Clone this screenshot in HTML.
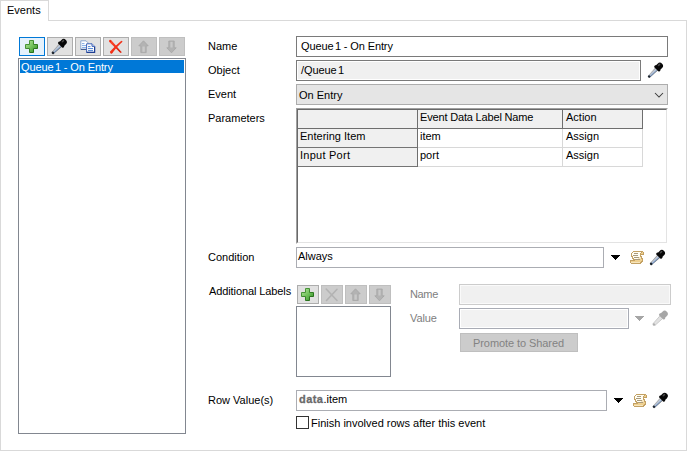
<!DOCTYPE html>
<html><head><meta charset="utf-8">
<style>
*{box-sizing:border-box;margin:0;padding:0}
html,body{width:687px;height:451px;overflow:hidden;background:#fff}
body{position:relative;font-family:"Liberation Sans",sans-serif;font-size:11px;color:#000}
.a{position:absolute}
.t{position:absolute;white-space:nowrap;line-height:13px;height:13px}
.btn{position:absolute;background:#e1e1e1;border:1px solid #adadad}
.dis{position:absolute;background:#cccccc;border:1px solid #bfbfbf}
svg{position:absolute;overflow:visible}
</style></head><body>
<!-- tab + panel -->
<div class="a" style="left:0;top:0;width:49px;height:21px;border:1px solid #d9d9d9;border-bottom:none;background:#fff"></div>
<div class="a" style="left:48px;top:20px;width:639px;height:1px;background:#d9d9d9"></div>
<div class="a" style="left:0;top:20px;width:1px;height:431px;background:#d9d9d9"></div>
<div class="a" style="left:686px;top:20px;width:1px;height:431px;background:#d9d9d9"></div>
<div class="a" style="left:0;top:450px;width:687px;height:1px;background:#d9d9d9"></div>
<div class="t" style="left:7px;top:4px">Events</div>

<!-- left toolbar -->
<div class="a" style="left:19px;top:37px;width:26px;height:19px;background:#e5f1fb;border:1px solid #0078d7"></div>
<div class="btn" style="left:47px;top:37px;width:26px;height:19px"></div>
<div class="btn" style="left:75px;top:37px;width:26px;height:19px"></div>
<div class="btn" style="left:103px;top:37px;width:26px;height:19px"></div>
<div class="dis" style="left:131px;top:37px;width:26px;height:19px"></div>
<div class="dis" style="left:159px;top:37px;width:26px;height:19px"></div>

<!-- list -->
<div class="a" style="left:18px;top:58px;width:168px;height:376px;border:1px solid #828790;background:#fff"></div>
<div class="a" style="left:20px;top:60px;width:164px;height:13px;background:#0078d7"></div>
<div class="t" style="left:21px;top:61px;color:#fff;letter-spacing:-0.12px">Queue<span style="margin-left:1.5px">1</span> - On Entry</div>

<!-- labels -->
<div class="t" style="left:208px;top:40px">Name</div>
<div class="t" style="left:208px;top:64px">Object</div>
<div class="t" style="left:208px;top:88px">Event</div>
<div class="t" style="left:208px;top:112px">Parameters</div>
<div class="t" style="left:208px;top:251px">Condition</div>
<div class="t" style="left:209px;top:285px;letter-spacing:-0.1px">Additional Labels</div>
<div class="t" style="left:208px;top:394px">Row Value(s)</div>

<!-- Name -->
<div class="a" style="left:296px;top:36px;width:372px;height:21px;border:1px solid #7a7a7a;background:#fff"></div>
<div class="t" style="left:301px;top:40px;letter-spacing:-0.12px">Queue<span style="margin-left:1.5px">1</span> - On Entry</div>
<!-- Object -->
<div class="a" style="left:296px;top:60px;width:345px;height:21px;border:1px solid #7a7a7a;background:#f0f0f0;box-shadow:inset 0 0 0 1px #fff"></div>
<div class="t" style="left:301px;top:64px;letter-spacing:-0.1px">/Queue<span style="margin-left:1.5px">1</span></div>
<!-- Event -->
<div class="a" style="left:296px;top:84px;width:372px;height:21px;border:1px solid #adadad;background:#e5e5e5"></div>
<div class="t" style="left:299px;top:89px">On Entry</div>

<!-- table -->
<div class="a" style="left:296px;top:108px;width:372px;height:136px;border-top:1px solid #a0a0a0;border-left:1px solid #a0a0a0;border-right:1px solid #fff;border-bottom:1px solid #fff"></div>
<div class="a" style="left:297px;top:109px;width:370px;height:134px;border-top:1px solid #696969;border-left:1px solid #696969;border-right:1px solid #e3e3e3;border-bottom:1px solid #e3e3e3;background:#fff"></div>
<!-- header row -->
<div class="a" style="left:298px;top:110px;width:345px;height:18px;background:#f0f0f0"></div>
<!-- row header col -->
<div class="a" style="left:298px;top:128px;width:119px;height:38px;background:#f0f0f0"></div>
<!-- light gridlines -->
<div class="a" style="left:418px;top:147px;width:225px;height:1px;background:#d8d8d8"></div>
<div class="a" style="left:418px;top:166px;width:225px;height:1px;background:#d8d8d8"></div>
<div class="a" style="left:562px;top:129px;width:1px;height:38px;background:#d8d8d8"></div>
<div class="a" style="left:642px;top:129px;width:1px;height:38px;background:#d8d8d8"></div>
<!-- dark gridlines -->
<div class="a" style="left:298px;top:128px;width:345px;height:1px;background:#6e6e6e"></div>
<div class="a" style="left:298px;top:147px;width:120px;height:1px;background:#747474"></div>
<div class="a" style="left:298px;top:166px;width:120px;height:1px;background:#747474"></div>
<div class="a" style="left:417px;top:110px;width:1px;height:57px;background:#6e6e6e"></div>
<div class="a" style="left:562px;top:110px;width:1px;height:19px;background:#6e6e6e"></div>
<div class="a" style="left:642px;top:110px;width:1px;height:19px;background:#6e6e6e"></div>
<div class="t" style="left:420px;top:111px;letter-spacing:-0.17px">Event Data Label Name</div>
<div class="t" style="left:566px;top:111px">Action</div>
<div class="t" style="left:300px;top:130px">Entering Item</div>
<div class="t" style="left:420px;top:130px">item</div>
<div class="t" style="left:566px;top:130px">Assign</div>
<div class="t" style="left:300px;top:149px;letter-spacing:0.25px">Input Port</div>
<div class="t" style="left:420px;top:149px">port</div>
<div class="t" style="left:566px;top:149px">Assign</div>

<!-- condition -->
<div class="a" style="left:296px;top:247px;width:308px;height:21px;border:1px solid #abadb3;background:#fff"></div>
<div class="t" style="left:298px;top:250px">Always</div>

<!-- additional labels -->
<div class="btn" style="left:297px;top:285px;width:22px;height:19px"></div>
<div class="dis" style="left:321px;top:285px;width:22px;height:19px"></div>
<div class="dis" style="left:345px;top:285px;width:22px;height:19px"></div>
<div class="dis" style="left:369px;top:285px;width:22px;height:19px"></div>
<div class="a" style="left:296px;top:306px;width:95px;height:71px;border:1px solid #828790;background:#fff"></div>

<div class="t" style="left:410px;top:288px;color:#7e7e7e;letter-spacing:-0.35px">Name</div>
<div class="t" style="left:410px;top:312px;color:#7e7e7e;letter-spacing:-0.1px">Value</div>
<div class="a" style="left:459px;top:284px;width:212px;height:21px;border:1px solid #cccccc;background:#f0f0f0;box-shadow:inset 0 0 0 1px #fafafa"></div>
<div class="a" style="left:459px;top:308px;width:170px;height:21px;border:1px solid #a9acb5;background:#f2f2f2;box-shadow:inset 0 0 0 1px #fff"></div>
<div class="a" style="left:460px;top:333px;width:118px;height:19px;background:#cccccc;border:1px solid #bfbfbf"></div>
<div class="t" style="left:473px;top:337px;color:#838383;letter-spacing:-0.08px">Promote to Shared</div>

<!-- row values -->
<div class="a" style="left:296px;top:390px;width:311px;height:21px;border:1px solid #abadb3;background:#fff"></div>
<div class="t" style="left:299px;top:393px"><b style="color:#6a6a6a;letter-spacing:0.45px;-webkit-text-stroke:0.3px #6a6a6a">data</b>.item</div>
<div class="a" style="left:296px;top:416px;width:13px;height:13px;border:1px solid #333;background:#fff"></div>
<div class="t" style="left:311px;top:417px">Finish involved rows after this event</div>

<svg width="687" height="451" viewBox="0 0 687 451" style="left:0;top:0">
<defs>
<linearGradient id="gs" x1="0" y1="0" x2="1" y2="1"><stop offset="0" stop-color="#56a444"/><stop offset="1" stop-color="#1b6410"/></linearGradient>
<linearGradient id="gp" x1="0" y1="0" x2="1" y2="1">
<stop offset="0" stop-color="#b9e6a4"/><stop offset="0.5" stop-color="#72c25c"/><stop offset="1" stop-color="#2f8a25"/>
</linearGradient>
<linearGradient id="tube" gradientUnits="userSpaceOnUse" x1="-1.9" y1="0" x2="1.9" y2="0">
<stop offset="0" stop-color="#4a4a4a"/><stop offset="0.22" stop-color="#a4aab2"/><stop offset="0.45" stop-color="#b4c2d6"/><stop offset="0.68" stop-color="#6a8cbc"/><stop offset="0.85" stop-color="#4a5a70"/><stop offset="1" stop-color="#2e2e2e"/>
</linearGradient>
<linearGradient id="tubeL" gradientUnits="userSpaceOnUse" x1="0" y1="8" x2="0" y2="18">
<stop offset="0" stop-color="#fff" stop-opacity="0.3"/><stop offset="1" stop-color="#fff" stop-opacity="0"/>
</linearGradient>
<g id="drop">
<path d="M-1.9,7.6 L1.9,7.6 L1.3,18 L-1.3,18 Z" fill="url(#tube)"/>
<path d="M-1.9,7.6 L1.9,7.6 L1.3,18 L-1.3,18 Z" fill="url(#tubeL)"/>
<rect x="-1.3" y="17.1" width="2.6" height="2.3" rx="1" fill="#1e2630"/>
<path d="M-3.1,6.2 V3.1 A3.1,3.1 0 0 1 3.1,3.1 V6.2 Z" fill="#070707"/>
<rect x="-3.7" y="5.4" width="7.4" height="2.6" rx="1" fill="#070707"/>
<ellipse cx="-1.2" cy="3" rx="0.8" ry="1.7" fill="#4a4a4a"/>
</g>
<g id="dropg">
<path d="M-1.9,7.6 L1.9,7.6 L1.3,18 L-1.3,18 Z" fill="#e2e2e2" stroke="#bdbdbd" stroke-width="0.7"/>
<rect x="-1.3" y="17.1" width="2.6" height="2.3" rx="1" fill="#b0b0b0"/>
<path d="M-3.1,6.2 V3.1 A3.1,3.1 0 0 1 3.1,3.1 V6.2 Z" fill="#a6a6a6"/>
<rect x="-3.7" y="5.4" width="7.4" height="2.6" rx="1" fill="#a6a6a6"/>
</g>
<g id="scroll" shape-rendering="crispEdges"><rect x="4" y="0" width="10" height="1" fill="#c3a163"/><rect x="3" y="1" width="1" height="1" fill="#c3a163"/><rect x="4" y="1" width="8" height="1" fill="#fffdf2"/><rect x="12" y="1" width="1" height="1" fill="#c3a163"/><rect x="13" y="1" width="1" height="1" fill="#efd090"/><rect x="14" y="1" width="1" height="1" fill="#c3a163"/><rect x="2" y="2" width="1" height="1" fill="#c3a163"/><rect x="3" y="2" width="2" height="1" fill="#fffdf2"/><rect x="5" y="2" width="4" height="1" fill="#a99a7c"/><rect x="9" y="2" width="2" height="1" fill="#fffdf2"/><rect x="11" y="2" width="1" height="1" fill="#c3a163"/><rect x="12" y="2" width="2" height="1" fill="#efd090"/><rect x="14" y="2" width="1" height="1" fill="#c3a163"/><rect x="2" y="3" width="1" height="1" fill="#c3a163"/><rect x="3" y="3" width="8" height="1" fill="#fffdf2"/><rect x="11" y="3" width="4" height="1" fill="#c3a163"/><rect x="2" y="4" width="1" height="1" fill="#c3a163"/><rect x="3" y="4" width="1" height="1" fill="#fffdf2"/><rect x="4" y="4" width="5" height="1" fill="#a99a7c"/><rect x="9" y="4" width="2" height="1" fill="#fffdf2"/><rect x="11" y="4" width="1" height="1" fill="#c3a163"/><rect x="2" y="5" width="2" height="1" fill="#c3a163"/><rect x="4" y="5" width="7" height="1" fill="#fffdf2"/><rect x="11" y="5" width="2" height="1" fill="#c3a163"/><rect x="3" y="6" width="1" height="1" fill="#c3a163"/><rect x="4" y="6" width="1" height="1" fill="#fffdf2"/><rect x="5" y="6" width="5" height="1" fill="#a99a7c"/><rect x="10" y="6" width="2" height="1" fill="#f6e5bd"/><rect x="12" y="6" width="1" height="1" fill="#c3a163"/><rect x="3" y="7" width="2" height="1" fill="#c3a163"/><rect x="5" y="7" width="4" height="1" fill="#fffdf2"/><rect x="9" y="7" width="3" height="1" fill="#f6e5bd"/><rect x="12" y="7" width="2" height="1" fill="#c3a163"/><rect x="4" y="8" width="2" height="1" fill="#c3a163"/><rect x="6" y="8" width="5" height="1" fill="#a99a7c"/><rect x="11" y="8" width="2" height="1" fill="#efd090"/><rect x="13" y="8" width="1" height="1" fill="#c3a163"/><rect x="1" y="9" width="5" height="1" fill="#c3a163"/><rect x="6" y="9" width="7" height="1" fill="#efd090"/><rect x="13" y="9" width="1" height="1" fill="#c3a163"/><rect x="1" y="10" width="1" height="1" fill="#c3a163"/><rect x="2" y="10" width="10" height="1" fill="#efd090"/><rect x="12" y="10" width="2" height="1" fill="#c3a163"/><rect x="1" y="11" width="1" height="1" fill="#c3a163"/><rect x="2" y="11" width="9" height="1" fill="#f6e5bd"/><rect x="11" y="11" width="2" height="1" fill="#c3a163"/><rect x="2" y="12" width="10" height="1" fill="#c3a163"/></g>
</defs>

<!-- add (big) -->
<path d="M29.5,40.5 H33.5 V44.5 H37.5 V48.5 H33.5 V52.5 H29.5 V48.5 H25.5 V44.5 H29.5 Z" fill="url(#gp)" stroke="url(#gs)" stroke-width="1"/>
<!-- dropper btn -->
<use href="#drop" transform="translate(65.85,39.95) rotate(45)"/>
<!-- copy -->
<path d="M80.8,40.8 H86 L88,42.8 V49.3 H80.8 Z" fill="#fff" stroke="#8ba7cf" stroke-width="1"/>
<path d="M80.8,49.4 H88" stroke="#3b5486" stroke-width="1"/>
<path d="M82,43.6 H84.5 M82,45.6 H86.5 M82,47.6 H86.5" stroke="#7eaae6" stroke-width="1"/>
<path d="M86.6,43.8 H92 L94.6,46.4 V52.4 H86.6 Z" fill="#fff" stroke="#3f63b6" stroke-width="1"/>
<path d="M86.6,52.4 H94.6 V46.4" fill="none" stroke="#1f3f92" stroke-width="1.2"/>
<path d="M92,43.8 V46.4 H94.6" fill="#cfdcf4" stroke="#3f63b6" stroke-width="1"/>
<path d="M88,46.6 H90.5 M88,48.6 H93 M88,50.6 H93" stroke="#4d84d6" stroke-width="1"/>
<!-- red x -->
<linearGradient id="xr" x1="0" y1="0" x2="1" y2="1"><stop offset="0" stop-color="#ff5236"/><stop offset="0.6" stop-color="#f02a12"/><stop offset="1" stop-color="#c81000"/></linearGradient>
<g fill="url(#xr)">
<path d="M109.12,41.8 L111.08,39.94 L121.31,51.72 L120.29,52.68 Z"/>
<circle cx="110.1" cy="40.9" r="1.1"/><circle cx="120.8" cy="52.2" r="0.7"/>
<path d="M121.06,41.08 L122.14,42.12 Q116.8,46.8 111.77,53.74 L109.83,51.86 Q115.4,45.6 121.06,41.08 Z"/>
<circle cx="111.2" cy="52.4" r="1.15"/><circle cx="121.6" cy="41.6" r="0.75"/>
</g>
<!-- up / down disabled -->
<path d="M143.5,40.8 L148.2,45.8 H146.2 V52.6 H140.8 V45.8 H138.8 Z" fill="#b3b3b3" stroke="#a6a6a6" stroke-width="0.8"/>
<path d="M142.4,46.5 V51.8 H144.8 V46.5" fill="#c9c9c9"/>
<path d="M171.5,52.8 L176.2,47.8 H174.2 V41 H168.8 V47.8 H166.8 Z" fill="#b3b3b3" stroke="#a6a6a6" stroke-width="0.8"/>
<path d="M170.4,41.8 V47.5 H172.6 V41.8" fill="#c9c9c9"/>

<!-- object dropper -->
<use href="#drop" transform="translate(662.05,63.65) rotate(45)"/>
<!-- event chevron -->
<path d="M655,93 L659,97 L663,93" fill="none" stroke="#3a3a3a" stroke-width="1.05"/>

<!-- condition -->
<path shape-rendering="crispEdges" fill="#000" d="M611,255h9v1h-1v1h-1v1h-1v1h-1v1h-1v-1h-1v-1h-1v-1h-1v-1h-1z"/>
<use href="#scroll" transform="translate(629,251)"/>
<use href="#drop" transform="translate(664.05,250.95) rotate(45)"/>

<!-- additional labels buttons -->
<path d="M305.5,288.5 H309.5 V292.5 H313.5 V296.5 H309.5 V300.5 H305.5 V296.5 H301.5 V292.5 H305.5 Z" fill="url(#gp)" stroke="url(#gs)" stroke-width="1"/>
<path d="M326.2,289 L337,300.5 M337,289.3 L326.5,300.5" stroke="#b3b3b3" stroke-width="1.6" fill="none" stroke-linecap="round"/>
<path d="M355.5,288.8 L360.2,293.8 H358.2 V300.5 H352.8 V293.8 H350.8 Z" fill="#b3b3b3" stroke="#a6a6a6" stroke-width="0.8"/>
<path d="M354.4,294.5 V299.7 H356.8 V294.5" fill="#c9c9c9"/>
<path d="M379.5,300.8 L384.2,295.8 H382.2 V289 H376.8 V295.8 H374.8 Z" fill="#b3b3b3" stroke="#a6a6a6" stroke-width="0.8"/>
<path d="M378.4,289.8 V295.5 H380.6 V289.8" fill="#c9c9c9"/>

<!-- value row -->
<path shape-rendering="crispEdges" fill="#a6a6a6" d="M635,316h9v1h-1v1h-1v1h-1v1h-1v1h-1v-1h-1v-1h-1v-1h-1v-1h-1z"/>
<use href="#dropg" transform="translate(666.85,311.65) rotate(45)"/>

<!-- row values -->
<path shape-rendering="crispEdges" fill="#000" d="M614,398h9v1h-1v1h-1v1h-1v1h-1v1h-1v-1h-1v-1h-1v-1h-1v-1h-1z"/>
<use href="#scroll" transform="translate(632,394)"/>
<use href="#drop" transform="translate(666.85,393.85) rotate(45)"/>
</svg>
</body></html>
